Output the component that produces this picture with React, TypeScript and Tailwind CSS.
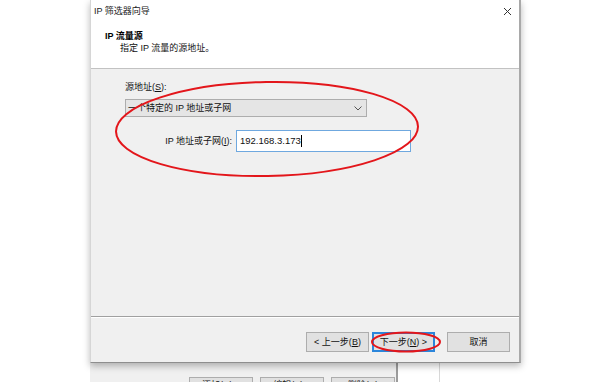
import React from 'react';

const FONT = { fontFamily: '"Liberation Sans", "Noto Sans CJK SC", sans-serif' };

function Btn({ children, active }: { children: React.ReactNode; active?: boolean }) {
  return (
    <div
      className={`w-[63px] h-[20px] flex items-center justify-center text-[9px] leading-none text-[#111] bg-[#e1e1e1] ${
        active ? 'border-2 border-[#2b86db]' : 'border border-[#adadad]'
      }`}
    >
      {children}
    </div>
  );
}

export default function App() {
  return (
    <div className="w-[612px] h-[382px] bg-white relative overflow-hidden" style={FONT}>
      {/* ─── Wizard dialog ─────────────────────────────────────────── */}
      <div className="relative z-10 ml-[90px] w-[431px] bg-white border-l border-[#d6d6d6] border-r-2 border-r-[#a9a9a9] border-b border-b-[#8e8e8e] shadow-[0_3px_7px_rgba(0,0,0,0.28)]">
        <div className="h-[22px] flex items-center justify-between pl-[3px] pr-[7px]">
          <span className="text-[9px] leading-none text-[#222]">IP 筛选器向导</span>
          <svg width="9" height="9" viewBox="0 0 9 9" className="text-[#333]">
            <path d="M1 1L8 8M8 1L1 8" stroke="currentColor" strokeWidth="1" fill="none" />
          </svg>
        </div>

        <div className="h-[47px] pl-[14px] pt-[8px] border-b border-[#c2c2c2]">
          <div className="text-[9px] leading-[12px] font-bold text-black">IP 流量源</div>
          <div className="text-[9px] leading-[12px] text-[#111] pl-[15px]">指定 IP 流量的源地址。</div>
        </div>

        <div className="h-[247px] bg-[#f0f0f0] pl-[34px] pt-[12px]">
          <div className="text-[9px] leading-[12px] text-[#111]">
            源地址(<span className="underline">S</span>):
          </div>
          <div className="mt-[6px] w-[242px] h-[18px] bg-[#e5e5e5] border border-[#adadad] flex items-center justify-between pl-[2px] pr-[4px]">
            <span className="text-[9px] leading-none text-[#111]">一个特定的 IP 地址或子网</span>
            <svg width="8" height="5" viewBox="0 0 8 5">
              <path d="M0.5 0.5L4 4L7.5 0.5" stroke="#555" strokeWidth="1" fill="none" />
            </svg>
          </div>
          <div className="mt-[13px] flex items-center">
            <div className="w-[111px] pr-[4px] text-right text-[9px] leading-none text-[#111]">
              IP 地址或子网(<span className="underline">I</span>):
            </div>
            <div className="w-[175px] h-[22px] bg-white border border-[#6fa8df] flex items-center pl-[3px]">
              <span className="text-[9.5px] leading-none text-[#111]">192.168.3.173</span>
              <span className="w-px h-[12px] bg-black" />
            </div>
          </div>
        </div>

        <div className="border-t border-[#a0a0a0] border-b border-b-white" />

        <div className="h-[44px] bg-[#f0f0f0] flex justify-end pt-[14px] pr-[9px]">
          <Btn>&lt; 上一步(<span className="underline">B</span>)</Btn>
          <div className="w-[3px]" />
          <Btn active>
            下一步(<span className="underline">N</span>) &gt;
          </Btn>
          <div className="w-[12px]" />
          <Btn>取消</Btn>
        </div>
      </div>

      {/* ─── Window behind ─────────────────────────────────────────── */}
      <div className="flex h-[19px]">
        <div className="ml-[90px] w-[308px] bg-[#f0f0f0] border-r-2 border-[#9c9c9c] pl-[99px] pt-[14px] flex gap-[7px]">
          {['添加(D)...', '编辑(E)...', '删除(R)'].map((t) => (
            <div
              key={t}
              className="w-[64px] h-[22px] shrink-0 bg-[#e1e1e1] border border-[#adadad] flex items-start justify-center pt-[3px] text-[9px] leading-none text-[#111]"
            >
              {t}
            </div>
          ))}
        </div>
        <div className="w-[42px] border-r border-[#d8d8d8]" />
      </div>

      {/* ─── Red annotation marks ──────────────────────────────────── */}
      <svg className="absolute inset-0 z-20 pointer-events-none" width="612" height="382" viewBox="0 0 612 382">
        <ellipse cx="267" cy="129" rx="151" ry="47" fill="none" stroke="#e3161b" strokeWidth="2" transform="rotate(-1 267 129)" />
        <ellipse cx="406" cy="342" rx="34" ry="9.5" fill="none" stroke="#e3161b" strokeWidth="2" />
      </svg>
    </div>
  );
}
